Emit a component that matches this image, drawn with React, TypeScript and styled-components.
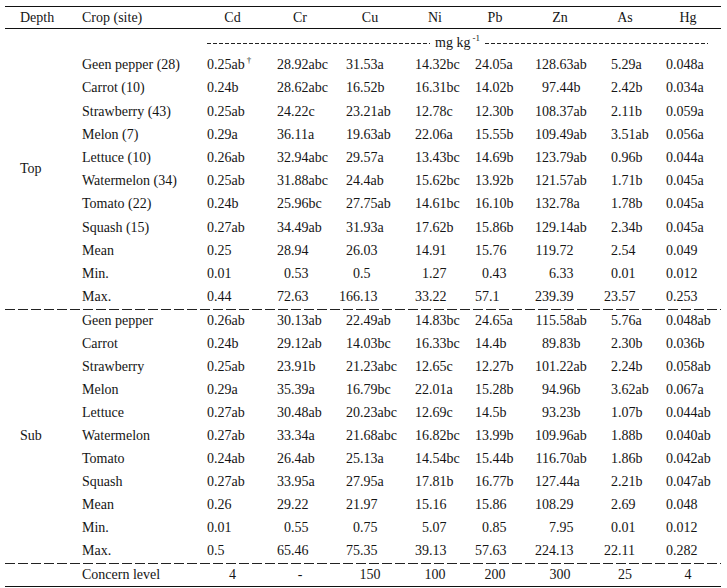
import React from "react";
import styled, { createGlobalStyle } from "styled-components";

const GlobalStyle = createGlobalStyle`
  html, body {
    margin: 0;
    padding: 0;
    background: #fff;
  }
  body {
    font-family: "Liberation Serif", "Times New Roman", serif;
    color: #151515;
  }
`;

// column widths and the x of the decimal point inside each numeric column
const columns = [
  { name: "Cd", width: 65, dec: 14 },
  { name: "Cr", width: 70, dec: 26 },
  { name: "Cu", width: 70, dec: 25 },
  { name: "Ni", width: 60, dec: 24 },
  { name: "Pb", width: 60, dec: 24 },
  { name: "Zn", width: 70, dec: 31 },
  { name: "As", width: 60, dec: 23 },
  { name: "Hg", width: 66, dec: 18 },
];

type Row = [string, string[]];

const topRows: Row[] = [
  ["Geen pepper (28)", ["0.25ab†", "28.92abc", "31.53a", "14.32bc", "24.05a", "128.63ab", "5.29a", "0.048a"]],
  ["Carrot (10)", ["0.24b", "28.62abc", "16.52b", "16.31bc", "14.02b", "97.44b", "2.42b", "0.034a"]],
  ["Strawberry (43)", ["0.25ab", "24.22c", "23.21ab", "12.78c", "12.30b", "108.37ab", "2.11b", "0.059a"]],
  ["Melon (7)", ["0.29a", "36.11a", "19.63ab", "22.06a", "15.55b", "109.49ab", "3.51ab", "0.056a"]],
  ["Lettuce (10)", ["0.26ab", "32.94abc", "29.57a", "13.43bc", "14.69b", "123.79ab", "0.96b", "0.044a"]],
  ["Watermelon (34)", ["0.25ab", "31.88abc", "24.4ab", "15.62bc", "13.92b", "121.57ab", "1.71b", "0.045a"]],
  ["Tomato (22)", ["0.24b", "25.96bc", "27.75ab", "14.61bc", "16.10b", "132.78a", "1.78b", "0.045a"]],
  ["Squash (15)", ["0.27ab", "34.49ab", "31.93a", "17.62b", "15.86b", "129.14ab", "2.34b", "0.045a"]],
  ["Mean", ["0.25", "28.94", "26.03", "14.91", "15.76", "119.72", "2.54", "0.049"]],
  ["Min.", ["0.01", "0.53", "0.5", "1.27", "0.43", "6.33", "0.01", "0.012"]],
  ["Max.", ["0.44", "72.63", "166.13", "33.22", "57.1", "239.39", "23.57", "0.253"]],
];

const subRows: Row[] = [
  ["Geen pepper", ["0.26ab", "30.13ab", "22.49ab", "14.83bc", "24.65a", "115.58ab", "5.76a", "0.048ab"]],
  ["Carrot", ["0.24b", "29.12ab", "14.03bc", "16.33bc", "14.4b", "89.83b", "2.30b", "0.036b"]],
  ["Strawberry", ["0.25ab", "23.91b", "21.23abc", "12.65c", "12.27b", "101.22ab", "2.24b", "0.058ab"]],
  ["Melon", ["0.29a", "35.39a", "16.79bc", "22.01a", "15.28b", "94.96b", "3.62ab", "0.067a"]],
  ["Lettuce", ["0.27ab", "30.48ab", "20.23abc", "12.69c", "14.5b", "93.23b", "1.07b", "0.044ab"]],
  ["Watermelon", ["0.27ab", "33.34a", "21.68abc", "16.82bc", "13.99b", "109.96ab", "1.88b", "0.040ab"]],
  ["Tomato", ["0.24ab", "26.4ab", "25.13a", "14.54bc", "15.44b", "116.70ab", "1.86b", "0.042ab"]],
  ["Squash", ["0.27ab", "33.95a", "27.95a", "17.81b", "16.77b", "127.44a", "2.21b", "0.047ab"]],
  ["Mean", ["0.26", "29.22", "21.97", "15.16", "15.86", "108.29", "2.69", "0.048"]],
  ["Min.", ["0.01", "0.55", "0.75", "5.07", "0.85", "7.95", "0.01", "0.012"]],
  ["Max.", ["0.5", "65.46", "75.35", "39.13", "57.63", "224.13", "22.11", "0.282"]],
];

const concern = ["4", "-", "150", "100", "200", "300", "25", "4"];

const Page = styled.div`
  padding: 6px 0 0 5px;
`;

const Table = styled.table`
  border-collapse: collapse;
  table-layout: fixed;
  width: 716px;
  font-size: 14px;
  line-height: 16px;
`;

const Col = styled.col<{ $w: number }>`
  width: ${({ $w }) => $w}px;
`;

const Head = styled.th<{ $left?: number }>`
  height: 21px;
  padding: 0 0 0 ${({ $left }) => $left ?? 0}px;
  font-weight: normal;
  text-align: ${({ $left }) => ($left !== undefined ? "left" : "center")};
  border-top: 1px solid #111;
  border-bottom: 1px solid #111;
`;

const BodyRow = styled.tr<{ $h?: number }>`
  height: ${({ $h }) => $h ?? 23.2}px;
`;

const Cell = styled.td`
  padding: 0;
  white-space: nowrap;
  vertical-align: middle;
`;

const Depth = styled(Cell)`
  padding-left: 15px;
`;

const Label = styled(Cell)`
  padding-left: 12px;
`;

const Centered = styled(Cell)`
  text-align: center;
`;

const Int = styled.span<{ $w: number }>`
  display: inline-block;
  width: ${({ $w }) => $w}px;
  text-align: right;
`;

const Sup = styled.sup`
  font-size: 9px;
  line-height: 0;
  vertical-align: 6px;
  margin-left: 2px;
`;

const Units = styled.div`
  display: flex;
  align-items: center;
  gap: 5px;
  padding: 3px 13px 0 7px;
`;

const ShortDash = styled.span`
  flex: 1;
  height: 1px;
  margin-top: 1px;
  background: repeating-linear-gradient(to right, #222 0 4px, transparent 4px 6px);
`;

const SepCell = styled.td`
  padding: 0;
  height: 1px;
`;

const LongDash = styled.div`
  height: 1px;
  background: repeating-linear-gradient(to right, #222 0 10px, transparent 10px 13px);
`;

const FootCell = styled(Centered)`
  border-bottom: 1px solid #111;
`;

const FootLabel = styled(Label)`
  border-bottom: 1px solid #111;
`;

const FootDepth = styled(Depth)`
  border-bottom: 1px solid #111;
`;

const Value: React.FC<{ v: string; dec: number }> = ({ v, dec }) => {
  const dagger = v.endsWith("†");
  const text = dagger ? v.slice(0, -1) : v;
  const dot = text.indexOf(".");
  const int = dot >= 0 ? text.slice(0, dot) : text;
  const rest = dot >= 0 ? text.slice(dot) : "";
  return (
    <Cell>
      <Int $w={dec}>{int}</Int>
      {rest}
      {dagger && <Sup>†</Sup>}
    </Cell>
  );
};

const Separator = () => (
  <tr>
    <SepCell colSpan={10}>
      <LongDash />
    </SepCell>
  </tr>
);

const Group: React.FC<{ rows: Row[]; depth: string; units?: boolean; pitch: number }> = ({
  rows,
  depth,
  units,
  pitch,
}) => (
  <>
    {units && (
      <BodyRow $h={25.2}>
        <Depth rowSpan={rows.length + 1}>{depth}</Depth>
        <Cell />
        <Cell colSpan={8}>
          <Units>
            <ShortDash />
            <span>
              mg kg<Sup>-1</Sup>
            </span>
            <ShortDash />
          </Units>
        </Cell>
      </BodyRow>
    )}
    {rows.map(([label, values], i) => (
      <BodyRow key={label} $h={pitch}>
        {!units && i === 0 && <Depth rowSpan={rows.length}>{depth}</Depth>}
        <Label>{label}</Label>
        {values.map((v, j) => (
          <Value key={j} v={v} dec={columns[j].dec} />
        ))}
      </BodyRow>
    ))}
  </>
);

export default function App() {
  return (
    <Page>
      <GlobalStyle />
      <Table>
        <colgroup>
          <Col $w={65} />
          <Col $w={130} />
          {columns.map((c) => (
            <Col key={c.name} $w={c.width} />
          ))}
        </colgroup>
        <thead>
          <tr>
            <Head $left={15}>Depth</Head>
            <Head $left={12}>Crop (site)</Head>
            {columns.map((c) => (
              <Head key={c.name}>{c.name}</Head>
            ))}
          </tr>
        </thead>
        <tbody>
          <Group rows={topRows} depth="Top" units pitch={23.2} />
          <Separator />
          <Group rows={subRows} depth="Sub" pitch={23} />
          <Separator />
          <BodyRow>
            <FootDepth />
            <FootLabel>Concern level</FootLabel>
            {concern.map((c, i) => (
              <FootCell key={i}>{c}</FootCell>
            ))}
          </BodyRow>
        </tbody>
      </Table>
    </Page>
  );
}
